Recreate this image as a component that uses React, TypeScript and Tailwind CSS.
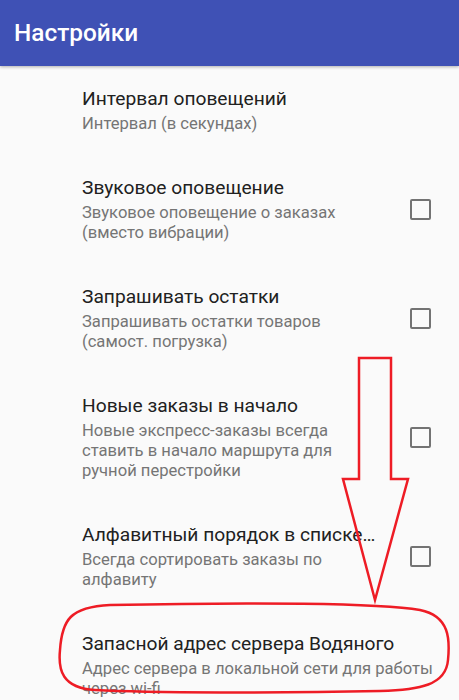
import React from 'react';

type Pref = {
  title: string;
  summary: string;
  checkbox?: boolean;
};

const prefs: Pref[] = [
  { title: 'Интервал оповещений', summary: 'Интервал (в секундах)' },
  { title: 'Звуковое оповещение', summary: 'Звуковое оповещение о заказах (вместо вибрации)', checkbox: true },
  { title: 'Запрашивать остатки', summary: 'Запрашивать остатки товаров (самост. погрузка)', checkbox: true },
  {
    title: 'Новые заказы в начало',
    summary: 'Новые экспресс-заказы всегда ставить в начало маршрута для ручной перестройки',
    checkbox: true,
  },
  { title: 'Алфавитный порядок в списке…', summary: 'Всегда сортировать заказы по алфавиту', checkbox: true },
  { title: 'Запасной адрес сервера Водяного', summary: 'Адрес сервера в локальной сети для работы через wi-fi' },
];

function PrefRow({ pref }: { pref: Pref }) {
  return (
    <div className="flex items-center pl-[82px] pr-[16px] pt-[21px] pb-[21px]">
      <div className={`min-w-0 flex-1 ${pref.checkbox ? 'pr-[28px]' : 'pr-0'}`}>
        <div className="truncate text-[19.2px] leading-[24px] text-[#212121]">{pref.title}</div>
        <div className="mt-[3px] text-[16.6px] leading-[20px] text-[#757575]">{pref.summary}</div>
      </div>
      {pref.checkbox && (
        <div className="mr-[12px] h-[21px] w-[21px] shrink-0 rounded-[2px] border-[2.5px] border-[#737373]" />
      )}
    </div>
  );
}

export default function App() {
  return (
    <div
      className="relative h-[700px] w-[459px] overflow-hidden bg-[#fafafa]"
      style={{ fontFamily: 'Roboto, "Noto Sans", sans-serif' }}
    >
      <div className="relative z-10 flex h-[66px] items-center bg-[#3f51b5] px-[14px] shadow-[0_1px_3px_rgba(0,0,0,0.3)]">
        <h1 className="text-[24.4px] font-medium text-white">Настройки</h1>
      </div>

      <div className="flex flex-col">
        {prefs.map((p, i) => (
          <PrefRow key={i} pref={p} />
        ))}
      </div>

      {/* red annotation: arrow + outline round the last row */}
      <svg
        className="pointer-events-none absolute left-0 top-0 z-20"
        width="459"
        height="700"
        viewBox="0 0 459 700"
        fill="none"
      >
        <path
          d="M359 358 L391 358 L391 479 L408 479 L375 600 L343 479 L359 479 Z"
          stroke="#ee1c25"
          strokeWidth="2.5"
          strokeLinejoin="miter"
        />
        <path
          d="M110 605 C250 602 380 603 420 610 C450 616 450 640 448 660 C446 685 420 690 380 691 C280 693 150 693 95 690 C62 688 58 670 60 650 C62 620 70 607 110 605 Z"
          stroke="#ee1c25"
          strokeWidth="2.5"
        />
      </svg>
    </div>
  );
}
